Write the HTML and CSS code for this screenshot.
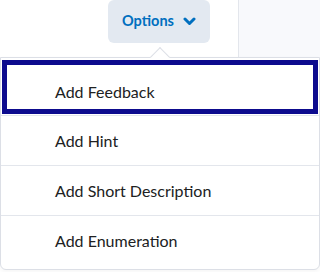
FILE: index.html
```html
<!DOCTYPE html>
<html>
<head>
<meta charset="utf-8">
<link rel="stylesheet" href="styles.css">
</head>
<body>
<div class="page">
  <div class="topbar">
    <div class="left">
      <button class="options">Options
        <svg class="chev" width="13" height="9" viewBox="0 0 13 9"><polyline points="2,2 6.5,6.5 11,2" fill="none" stroke="#006fbf" stroke-width="3" stroke-linecap="round" stroke-linejoin="round"/></svg>
      </button>
    </div>
    <div class="right"></div>
  </div>
  <div class="menu">
    <div class="notch"></div>
    <div class="item focus">Add Feedback</div>
    <div class="item">Add Hint</div>
    <div class="item">Add Short Description</div>
    <div class="item">Add Enumeration</div>
  </div>
</div>
</body>
</html>
```
FILE: styles.css
```css
html, body {
  margin: 0;
  padding: 0;
  background: #ffffff;
}
.page {
  width: 320px;
  height: 272px;
  overflow: hidden;
  font-family: Lato, "Liberation Sans", sans-serif;
  position: relative;
}
.topbar {
  display: flex;
  height: 57px;
}
.left {
  width: 238px;
  border-right: 1px solid #e3e6ec;
  background: #ffffff;
}
.right {
  flex: 1;
  background: #f8f9fc;
}
.options {
  margin-left: 108px;
  width: 102px;
  height: 43px;
  border: none;
  border-radius: 6px;
  background: #e3e9f1;
  color: #006fbf;
  font-family: Lato, "Liberation Sans", sans-serif;
  font-weight: 700;
  font-size: 14.5px;
  display: flex;
  align-items: center;
  justify-content: center;
  gap: 9px;
  padding: 0 0 2px 0;
}
.chev {
  display: block;
  margin-top: 2px;
}
.menu {
  position: relative;
  border: 1px solid #dcdfe6;
  border-radius: 0 0 6px 6px;
  padding: 1px 0 4px 0;
  background: #ffffff;
  box-shadow: 0 2px 4px rgba(0,0,0,0.04);
}
.notch {
  position: absolute;
  left: 152px;
  top: -8px;
  width: 13px;
  height: 13px;
  background: #ffffff;
  border-top: 1px solid #dcdfe6;
  border-left: 1px solid #dcdfe6;
  transform: rotate(45deg);
}
.item {
  position: relative;
  height: 49px;
  border-top: 1px solid #e3e6ec;
  padding-left: 54px;
  display: flex;
  align-items: center;
  font-size: 16px;
  color: #202122;
}
.item.focus {
  height: 48px;
  padding-top: 8px;
  border-top: none;
  outline: 5px solid #0d0b8e;
  outline-offset: -6px;
}
```
